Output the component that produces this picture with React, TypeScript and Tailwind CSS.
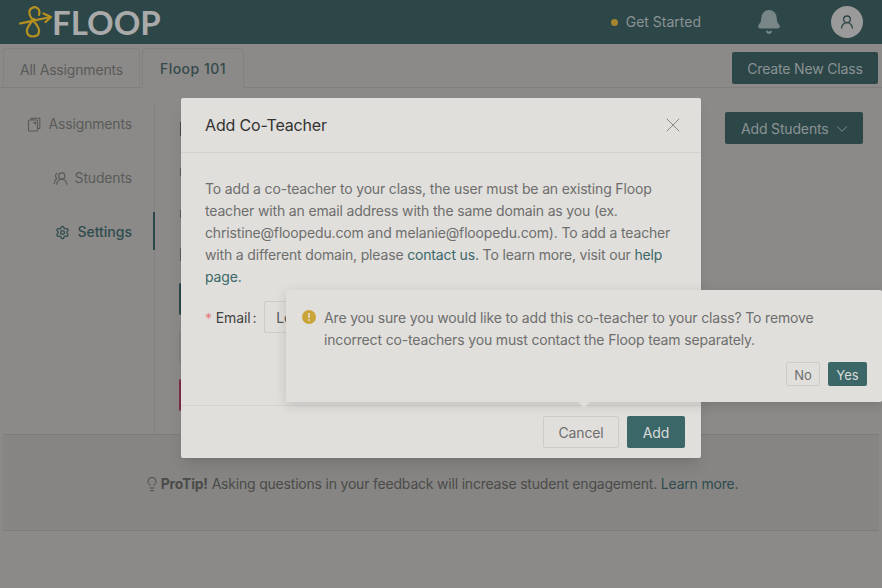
import { Bell, ChevronDown, Lightbulb, Settings, UserRound, UsersRound, X } from "lucide-react"

function Logo() {
  return (
    <div className="ml-[18px] flex items-center">
      <svg width="36" height="36" viewBox="18 5 36 36" fill="none" className="mr-[-2px]">
        <path
          d="M20 24.5 C 29 23 40 20 50 18 M43.5 14.5 L51 18 L45.5 23 M39 16 C 41 9 35 7 32 9 C 28 11 29 16 32 20 C 35 24 40 28 39 33 C 38 39 28 39 27 33 C 26 28 31 24 34 20"
          stroke="#b3901f"
          strokeWidth="2.2"
          strokeLinecap="round"
          strokeLinejoin="round"
        />
      </svg>
      <span className="font-['Lato',sans-serif] text-[33px] leading-none font-bold tracking-[0px] text-[#a9aaa9]">FLOOP</span>
    </div>
  )
}

function AssignmentsIcon() {
  return (
    <svg width="15" height="15" viewBox="0 0 15 15" fill="none" stroke="currentColor" strokeWidth="1.1" strokeLinejoin="round">
      <rect x="1.5" y="3" width="9" height="11" rx="1" />
      <path d="M4 3 V1.2 H12.8 V11.5 H10.5" />
      <path d="M6 3 V1.2 M6.5 5 L8.5 7 V5" />
    </svg>
  )
}

function AlertIcon() {
  return (
    <svg width="14" height="14" viewBox="0 0 14 14" className="mt-[3px] mr-[8px] shrink-0">
      <circle cx="7" cy="7" r="7" fill="#c9a537" />
      <rect x="6.2" y="3" width="1.6" height="5" rx="0.6" fill="#e0dfdc" />
      <circle cx="7" cy="10" r="0.95" fill="#e0dfdc" />
    </svg>
  )
}

function NavItem({ icon, label, active }: { icon: React.ReactNode; label: string; active?: boolean }) {
  return (
    <div
      className={`mr-[-1px] flex h-[38px] items-center justify-end gap-[7px] border-r-2 pt-[2px] pr-[21px] ${
        active ? "border-[#2a4749] text-[#2f4c4e]" : "border-transparent text-[#5a5a59]"
      }`}
    >
      {icon}
      <span className={active ? "font-medium tracking-normal" : ""}>{label}</span>
    </div>
  )
}

export default function App() {
  return (
    <div className="relative h-[588px] w-[882px] overflow-hidden bg-[#8b8a88] font-['Inter',sans-serif] text-[14px] leading-[22px] tracking-[-0.16px]">
      {/* top bar */}
      <header className="flex h-[44px] items-center bg-[#2d4749]">
        <Logo />
        <div className="ml-auto flex items-center">
          <span className="h-[7px] w-[7px] rounded-full bg-[#a4852f]" />
          <span className="ml-[8px] tracking-normal text-[#8b9293]">Get Started</span>
          <Bell size={26} fill="#788687" stroke="#788687" className="ml-[55px]" />
          <div className="mr-[19px] ml-[49px] flex h-[32px] w-[32px] items-center justify-center rounded-full bg-[#999a99]">
            <UserRound size={16} className="text-[#2d4749]" />
          </div>
        </div>
      </header>

      {/* tabs */}
      <div className="flex h-[44px] items-start border-b border-[#817f7d] pt-[4px] pr-[4px] pl-[3px]">
        <div className="flex h-[40px] w-[137px] items-center justify-center rounded-t border border-b-0 border-[#838280] pt-[2px] text-[#5a5a59]">
          All Assignments
        </div>
        <div className="relative ml-[2px] flex h-[40px] w-[102px] items-center justify-center rounded-t border border-[#838280] border-b-[#8b8a88] pt-[2px] font-medium tracking-[0.5px] text-[#34494b]">
          Floop 101
        </div>
        <button className="mt-[4px] ml-auto h-[32px] w-[146px] rounded-[2px] bg-[#2d4749] pt-[2px] text-[#8b9293]">Create New Class</button>
      </div>

      {/* body */}
      <div className="flex h-[346px]">
        <aside className="mt-[16px] w-[155px]">
          <div className="flex h-[330px] flex-col border-r border-[#838280]">
            <div className="flex flex-col gap-[16px]">
              <NavItem icon={<AssignmentsIcon />} label="Assignments" />
              <NavItem icon={<UsersRound size={15} className="-scale-x-100" />} label="Students" />
              <NavItem icon={<Settings size={15} />} label="Settings" active />
            </div>
          </div>
        </aside>
        <main className="flex-1 pt-[34px] pl-[24px]">
          <div className="ml-[1px] h-[14px] w-[2px] bg-[#4a4a49]" />
          <div className="mt-[32px] ml-[1px] h-[8px] w-[2px] bg-[#5c5c5b]" />
          <div className="mt-[34px] ml-[1px] h-[8px] w-[2px] bg-[#5c5c5b]" />
          <div className="mt-[30px] ml-[1px] h-[13px] w-[2px] bg-[#5c5c5b]" />
          <div className="mt-[22px] flex flex-col gap-[16px]">
            <div className="h-[32px] w-[40px] rounded-[2px] bg-[#2a4749]" />
            <div className="h-[32px] w-[40px] rounded-[2px] border border-[#7d7c7a]" />
            <div className="h-[32px] w-[40px] rounded-[2px] bg-[#7b2f47]" />
          </div>
        </main>
        <div className="pt-[24px] pr-[19px]">
          <button className="flex h-[32px] w-[138px] items-center gap-[4px] rounded-[2px] bg-[#2d4749] pt-[2px] pl-[16px] text-[#8b9293]">
            Add Students
            <ChevronDown size={18} strokeWidth={1.2} />
          </button>
        </div>
      </div>

      {/* protip */}
      <div className="mx-[3px] flex h-[97px] w-[876px] items-center justify-center border-y border-[#7d7c7a] bg-[#868583] pt-[3px] tracking-[-0.2px] text-[#4b4b4a]">
        <Lightbulb size={16} strokeWidth={1.5} className="mr-[1px] text-[#4b4b4a]" />
        <span>
          <b className="font-bold">ProTip!</b> Asking questions in your feedback will increase student engagement.{" "}
          <span className="text-[#2f4c4e]">Learn more.</span>
        </span>
      </div>

      {/* modal */}
      <div className="absolute top-[98px] left-[181px] flex h-[360px] w-[520px] flex-col rounded-[2px] bg-[#e0dfdc] shadow-lg">
        <div className="flex h-[55px] items-center justify-between border-b border-[#d3d2cf] pr-[16px] pl-[24px]">
          <span className="text-[16px] font-normal text-[#333332]">Add Co-Teacher</span>
          <X size={24} strokeWidth={1} className="text-[#8a8987]" />
        </div>
        <div className="flex-1 px-[24px] pt-[25px] text-[#6e6e6c]">
          <p>
            To add a co-teacher to your class, the user must be an existing Floop teacher with an email address with the same
            domain as you (ex. christine@floopedu.com and melanie@floopedu.com). To add a teacher with a different domain, please{" "}
            <span className="text-[#3b6769]">contact us.</span> To learn more, visit our{" "}
            <span className="text-[#3b6769]">help page.</span>
          </p>
          <div className="mt-[13px] flex items-center">
            <span className="mr-[4px] pt-[3px] text-[#e9787c]">*</span>
            <span className="pt-[2px] text-[#434342]">Email</span>
            <span className="mr-[8px] ml-[2px] pt-[2px] text-[#434342]">:</span>
            <div className="flex h-[32px] w-[200px] items-center rounded-[2px] border border-[#cdccc9] pt-[2px] pl-[11px] text-[#5a5a58]">
              Lee
            </div>
          </div>
        </div>
        <div className="flex h-[53px] items-center justify-end gap-[8px] border-t border-[#d3d2cf] pr-[16px]">
          <button className="h-[32px] w-[76px] rounded-[2px] border border-[#cdccc9] pt-[2px] text-[#6e6e6c]">Cancel</button>
          <button className="h-[32px] w-[58px] rounded-[2px] bg-[#3b6769] pt-[2px] text-[#dcdcd9]">Add</button>
        </div>
      </div>

      {/* confirm popover */}
      <div className="absolute top-[290px] left-[286px] h-[112px] w-[596px] rounded-[2px] bg-[#e0dfdc] shadow-[0_3px_12px_rgba(0,0,0,0.14)]">
        <div className="flex pt-[17px] pr-[16px] pl-[16px]">
          <AlertIcon />
          <p className="w-[520px] text-[#6e6e6c]">
            Are you sure you would like to add this co-teacher to your class? To remove incorrect co-teachers you must contact the Floop team separately.
          </p>
        </div>
        <div className="mt-[11px] flex justify-end gap-[8px] pr-[15px] tracking-normal">
          <button className="h-[24px] w-[34px] rounded-[2px] border border-[#cdccc9] pt-[1px] text-[13px] text-[#6e6e6c]">No</button>
          <button className="h-[24px] w-[39px] rounded-[2px] bg-[#3b6769] pt-[1px] text-[13px] text-[#dcdcd9]">Yes</button>
        </div>
        <div className="absolute top-[108px] left-[294px] h-[8px] w-[8px] rotate-45 bg-[#e0dfdc]" />
      </div>
    </div>
  )
}
